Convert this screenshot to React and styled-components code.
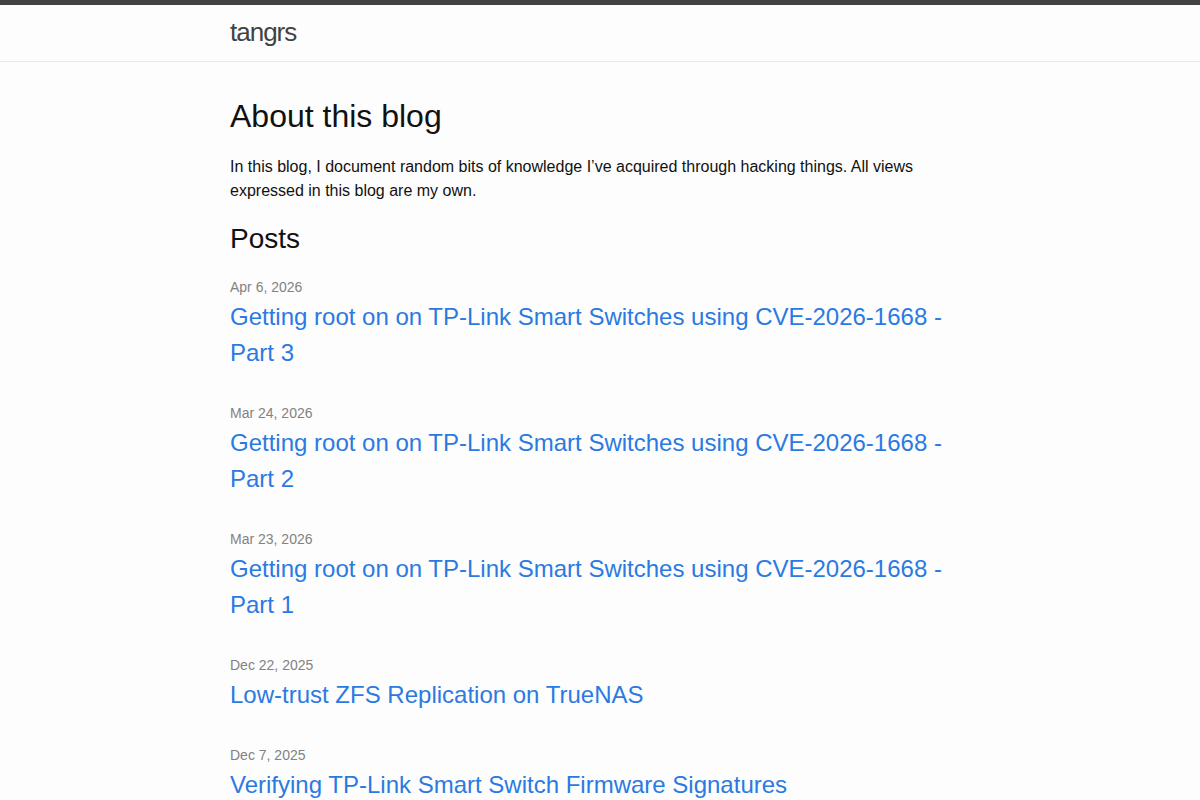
import styled, { createGlobalStyle } from "styled-components";

const posts = [
  {
    date: "Apr 6, 2026",
    title: "Getting root on on TP-Link Smart Switches using CVE-2026-1668 - Part 3",
  },
  {
    date: "Mar 24, 2026",
    title: "Getting root on on TP-Link Smart Switches using CVE-2026-1668 - Part 2",
  },
  {
    date: "Mar 23, 2026",
    title: "Getting root on on TP-Link Smart Switches using CVE-2026-1668 - Part 1",
  },
  { date: "Dec 22, 2025", title: "Low-trust ZFS Replication on TrueNAS" },
  { date: "Dec 7, 2025", title: "Verifying TP-Link Smart Switch Firmware Signatures" },
];

export default function App() {
  return (
    <>
      <GlobalStyle />
      <SiteHeader>
        <Wrapper>
          <SiteTitle href="#">tangrs</SiteTitle>
        </Wrapper>
      </SiteHeader>
      <PageContent>
        <Wrapper>
          <PageHeading>About this blog</PageHeading>
          <Intro>
            In this blog, I document random bits of knowledge I’ve acquired through hacking
            things. All views expressed in this blog are my own.
          </Intro>
          <ListHeading>Posts</ListHeading>
          <PostList>
            {posts.map((post) => (
              <PostItem key={post.title}>
                <PostMeta>{post.date}</PostMeta>
                <PostTitle>
                  <PostLink href="#">{post.title}</PostLink>
                </PostTitle>
              </PostItem>
            ))}
          </PostList>
        </Wrapper>
      </PageContent>
    </>
  );
}

const GlobalStyle = createGlobalStyle`
  html, body {
    margin: 0;
    padding: 0;
  }
  body {
    font: 400 16px/1.5 "Liberation Sans", Arial, sans-serif;
    color: #111;
    background-color: #fdfdfd;
  }
`;

const Wrapper = styled.div`
  max-width: 740px;
  margin: 0 auto;
  padding: 0 30px;
`;

const SiteHeader = styled.header`
  border-top: 5px solid #424242;
  border-bottom: 1px solid #e8e8e8;
  min-height: 55.95px;
  box-sizing: content-box;
`;

const SiteTitle = styled.a`
  display: inline-block;
  font-size: 26px;
  font-weight: 300;
  line-height: 54px;
  letter-spacing: -1px;
  color: #424242;
  text-decoration: none;
`;

const PageContent = styled.main`
  padding: 30px 0;
`;

const PageHeading = styled.h1`
  font-size: 32px;
  font-weight: 400;
  line-height: 1.5;
  margin: 0 0 15px;
`;

const Intro = styled.p`
  margin: 0 0 15px;
`;

const ListHeading = styled.h2`
  font-size: 28px;
  font-weight: 400;
  line-height: 1.5;
  margin: 0 0 15px;
`;

const PostList = styled.ul`
  list-style: none;
  margin: 0;
  padding: 0;
`;

const PostItem = styled.li`
  margin-bottom: 30px;
`;

const PostMeta = styled.span`
  font-size: 14px;
  color: #828282;
`;

const PostTitle = styled.h3`
  margin: 0;
  font-weight: 400;
`;

const PostLink = styled.a`
  display: block;
  font-size: 24px;
  line-height: 1.5;
  color: #2a7ae2;
  text-decoration: none;
`;
